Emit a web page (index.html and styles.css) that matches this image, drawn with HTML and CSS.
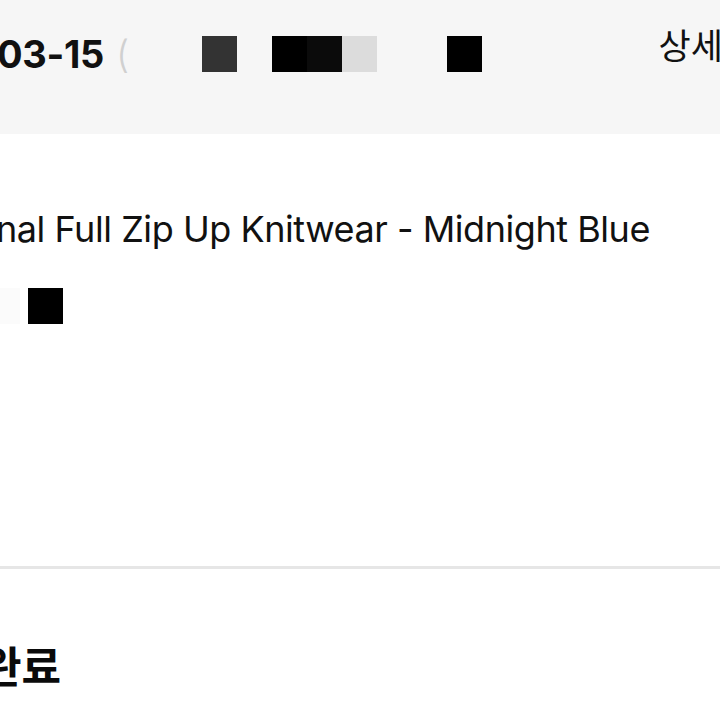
FILE: index.html
```html
<!DOCTYPE html>
<html lang="ko">
<head>
<meta charset="utf-8">
<link rel="stylesheet" href="styles.css">
</head>
<body>
<div class="page">
  <header class="top">
    <div class="row">
      <span class="date">03-15</span>
      <span class="paren">(</span>
      <span class="redact r-dark"></span>
      <span class="redact-group">
        <span class="redact r-black"></span>
        <span class="redact r-black2"></span>
        <span class="redact r-light"></span>
      </span>
      <span class="redact r-black r-last"></span>
      <span class="detail">상세</span>
    </div>
  </header>
  <section class="product">
    <p class="name">nal Full Zip Up Knitwear - Midnight Blue</p>
    <div class="option">
      <span class="faint"></span>
      <span class="redact r-black"></span>
    </div>
  </section>
  <hr class="divider">
  <section class="status">
    <p class="status-text">완료</p>
  </section>
</div>
</body>
</html>
```

FILE: styles.css
```css
html, body {
  margin: 0;
  padding: 0;
  background: #ffffff;
}
.page {
  width: 720px;
  height: 720px;
  overflow: hidden;
  font-family: Inter, "Noto Sans CJK KR", sans-serif;
  color: #111111;
}
.top {
  height: 134px;
  background: #f6f6f6;
  box-sizing: border-box;
  padding-top: 36px;
}
.row {
  display: flex;
  align-items: flex-start;
  height: 36px;
}
.date {
  font-weight: 700;
  font-size: 38px;
  line-height: 36px;
  margin-left: -3px;
  letter-spacing: -0.3px;
  color: #111;
}
.paren {
  font-size: 38px;
  line-height: 36px;
  color: #d0d0d0;
  margin-left: 12px;
  font-weight: 300;
}
.redact {
  display: block;
  width: 35px;
  height: 36px;
  flex: none;
}
.r-dark {
  background: #333333;
  margin-left: 73px;
}
.redact-group {
  display: flex;
  margin-left: 35px;
}
.r-black { background: #000000; }
.r-black2 { background: #0b0b0b; }
.r-light { background: #dcdcdc; }
.r-last { margin-left: 70px; }
.detail {
  margin-left: auto;
  margin-right: -3px;
  font-family: "Noto Sans CJK KR", sans-serif;
  font-size: 35px;
  line-height: 35px;
  margin-top: -10px;
  color: #111;
}
.product {
  padding-top: 73px;
  height: 432px;
  box-sizing: border-box;
}
.name {
  margin: 0;
  font-size: 36px;
  line-height: 44px;
  margin-left: -4px;
  letter-spacing: -0.45px;
  white-space: nowrap;
  color: #111;
}
.option {
  display: flex;
  align-items: center;
  margin-top: 37px;
}
.faint {
  display: block;
  width: 20px;
  height: 36px;
  background: #fbfbfb;
}
.option .redact {
  margin-left: 8px;
}
.divider {
  margin: 0;
  border: 0;
  height: 3px;
  background: #e6e6e6;
}
.status {
  padding-top: 70px;
}
.status-text {
  margin: 0;
  font-family: "Noto Sans CJK KR", sans-serif;
  font-weight: 700;
  font-size: 43px;
  line-height: 50px;
  margin-left: -18px;
  color: #0a0a0a;
}
```
